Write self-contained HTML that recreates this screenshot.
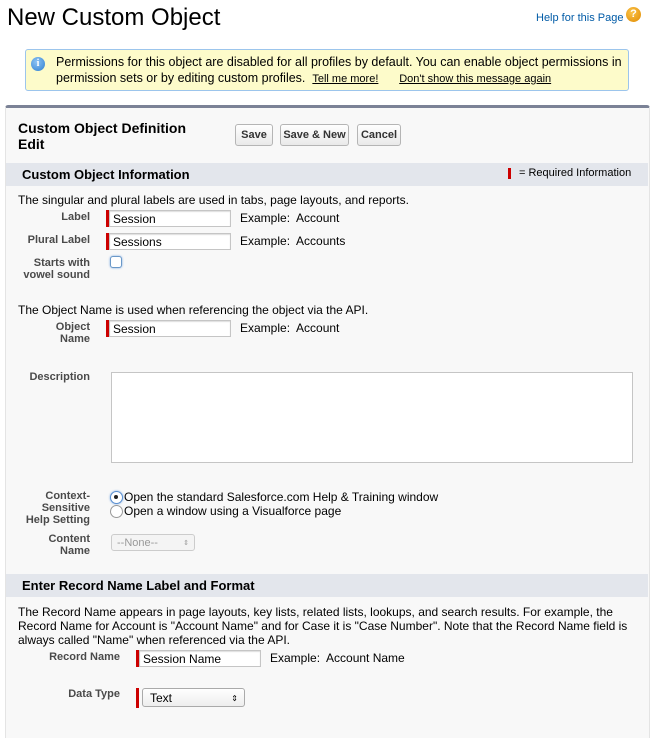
<!DOCTYPE html>
<html><head><meta charset="utf-8"><style>
body{margin:0;width:653px;height:726px;background:#fff;font-family:"Liberation Sans",Arial,sans-serif;position:relative;overflow:hidden;color:#000}
.a{position:absolute;white-space:nowrap}
.lbl{position:absolute;font-size:11px;font-weight:bold;color:#4a4a4a;text-align:right;width:90px;left:0;line-height:12px}
.inp{position:absolute;height:17px;border:1px solid #c5c5c5;background:#fff;font-size:12px;line-height:17px;padding-left:3px;box-sizing:border-box;box-shadow:inset 0 1px 1px #ddd}
.req{position:absolute;width:3px;background:#c00}
.ex{position:absolute;font-size:12px}
.btn{position:absolute;top:124px;height:22px;border:1px solid #b5b5b5;border-radius:3px;background:linear-gradient(#fff,#e9e9e9);font-size:11px;font-weight:bold;color:#333;text-align:center;line-height:21px;box-sizing:border-box}
.sec{position:absolute;left:6px;width:642px;height:23px;background:#e3e6ec;font-weight:bold;font-size:13px}
.t{position:absolute;font-size:12px;line-height:14px}
</style></head><body>
<div class="a" style="left:7px;top:4px;font-size:24px">New Custom Object</div>
<div class="a" style="left:536px;top:12px;font-size:11px;color:#015ba7">Help for this Page</div>
<div class="a" style="left:626px;top:7px;width:15px;height:15px;border-radius:50%;background:radial-gradient(circle at 40% 35%,#fbc44a,#e08a00);color:#fff;font-size:11px;font-weight:bold;text-align:center;line-height:15px">?</div>

<div class="a" style="left:25px;top:49px;width:602px;height:40px;background:#fdfbca;border:1px solid #9cc5ec;border-radius:3px"></div>
<div class="a" style="left:31px;top:57px;width:14px;height:14px;border-radius:50%;background:radial-gradient(circle at 40% 35%,#8cc3f4,#2f7fd0);color:#fff;font-size:10px;font-weight:bold;text-align:center;line-height:14px;font-family:'Liberation Serif',serif">i</div>
<div class="t" style="left:56px;top:55px;font-size:12.5px">Permissions for this object are disabled for all profiles by default. You can enable object permissions in</div>
<div class="t" style="left:56px;top:71px;font-size:12.5px">permission sets or by editing custom profiles.&nbsp; <span style="font-size:11px;text-decoration:underline">Tell me more!</span>&nbsp;&nbsp;&nbsp;&nbsp;&nbsp; <span style="font-size:11px;text-decoration:underline">Don't show this message again</span></div>

<div class="a" style="left:5px;top:105px;width:643px;height:630px;background:#f8f8f8;border-top:3px solid #7b8296;border-left:1px solid #e4e4e4;border-right:1px solid #e4e4e4;border-radius:3px 3px 0 0"></div>
<div class="a" style="left:18px;top:120px;font-size:14px;font-weight:bold;line-height:16px;white-space:normal;width:190px">Custom Object Definition Edit</div>
<div class="btn" style="left:235px;width:38px">Save</div>
<div class="btn" style="left:280px;width:69px">Save &amp; New</div>
<div class="btn" style="left:357px;width:44px">Cancel</div>

<div class="sec" style="top:163px"><span class="a" style="left:16px;top:4px">Custom Object Information</span><span class="a" style="left:502px;top:5px;width:3px;height:11px;background:#c00"></span><span class="a" style="left:513px;top:4px;font-size:11px;font-weight:normal">= Required Information</span></div>

<div class="t" style="left:18px;top:193px">The singular and plural labels are used in tabs, page layouts, and reports.</div>
<div class="lbl" style="top:211px">Label</div>
<div class="req" style="left:106px;top:210px;height:17px"></div><div class="inp" style="left:109px;top:210px;width:122px">Session</div>
<div class="ex" style="left:240px;top:211px">Example:&nbsp; Account</div>
<div class="lbl" style="top:234px">Plural Label</div>
<div class="req" style="left:106px;top:233px;height:17px"></div><div class="inp" style="left:109px;top:233px;width:122px">Sessions</div>
<div class="ex" style="left:240px;top:234px">Example:&nbsp; Accounts</div>
<div class="lbl" style="top:257px">Starts with<br>vowel sound</div>
<div class="a" style="left:110px;top:256px;width:10px;height:10px;border:1px solid #6a98c8;border-radius:3px;box-shadow:0 0 2px #7aa8e0;background:#fff"></div>

<div class="t" style="left:18px;top:303px">The Object Name is used when referencing the object via the API.</div>
<div class="lbl" style="top:321px">Object<br>Name</div>
<div class="req" style="left:106px;top:320px;height:17px"></div><div class="inp" style="left:109px;top:320px;width:122px">Session</div>
<div class="ex" style="left:240px;top:321px">Example:&nbsp; Account</div>

<div class="lbl" style="top:371px">Description</div>
<div class="a" style="left:111px;top:372px;width:520px;height:89px;border:1px solid #c5c5c5;background:#fff"></div>

<div class="lbl" style="top:490px">Context-<br>Sensitive<br>Help Setting</div>
<div class="a" style="left:110px;top:491px;width:11px;height:11px;border:1px solid #5a8fd0;border-radius:50%;background:#fff;box-shadow:0 0 2px #7aa8e0"></div>
<div class="a" style="left:114px;top:495px;width:4px;height:4px;border-radius:50%;background:#222"></div>
<div class="t" style="left:124px;top:490px">Open the standard Salesforce.com Help &amp; Training window</div>
<div class="a" style="left:110px;top:505px;width:11px;height:11px;border:1px solid #999;border-radius:50%;background:#fff"></div>
<div class="t" style="left:124px;top:504px">Open a window using a Visualforce page</div>
<div class="lbl" style="top:533px">Content<br>Name</div>
<div class="a" style="left:111px;top:534px;width:84px;height:17px;border:1px solid #ccc;border-radius:3px;background:#f4f4f4;color:#999;font-size:11px;line-height:17px;padding-left:5px;box-sizing:border-box">--None--<span style="position:absolute;right:5px;font-size:7px">&#8661;</span></div>

<div class="sec" style="top:574px"><span class="a" style="left:16px;top:4px">Enter Record Name Label and Format</span></div>
<div class="t" style="left:18px;top:605px;white-space:normal;width:620px">The Record Name appears in page layouts, key lists, related lists, lookups, and search results. For example, the Record Name for Account is "Account Name" and for Case it is "Case Number". Note that the Record Name field is always called "Name" when referenced via the API.</div>
<div class="lbl" style="top:651px;width:120px">Record Name</div>
<div class="req" style="left:136px;top:650px;height:17px"></div><div class="inp" style="left:139px;top:650px;width:122px">Session Name</div>
<div class="ex" style="left:270px;top:651px">Example:&nbsp; Account Name</div>
<div class="lbl" style="top:688px;width:120px">Data Type</div>
<div class="req" style="left:136px;top:688px;height:20px"></div>
<div class="a" style="left:142px;top:688px;width:103px;height:19px;border:1px solid #aaa;border-radius:3px;background:linear-gradient(#fff,#eee);font-size:12px;line-height:19px;padding-left:7px;box-sizing:border-box">Text<span style="position:absolute;right:6px;font-size:8px">&#8661;</span></div>
</body></html>
